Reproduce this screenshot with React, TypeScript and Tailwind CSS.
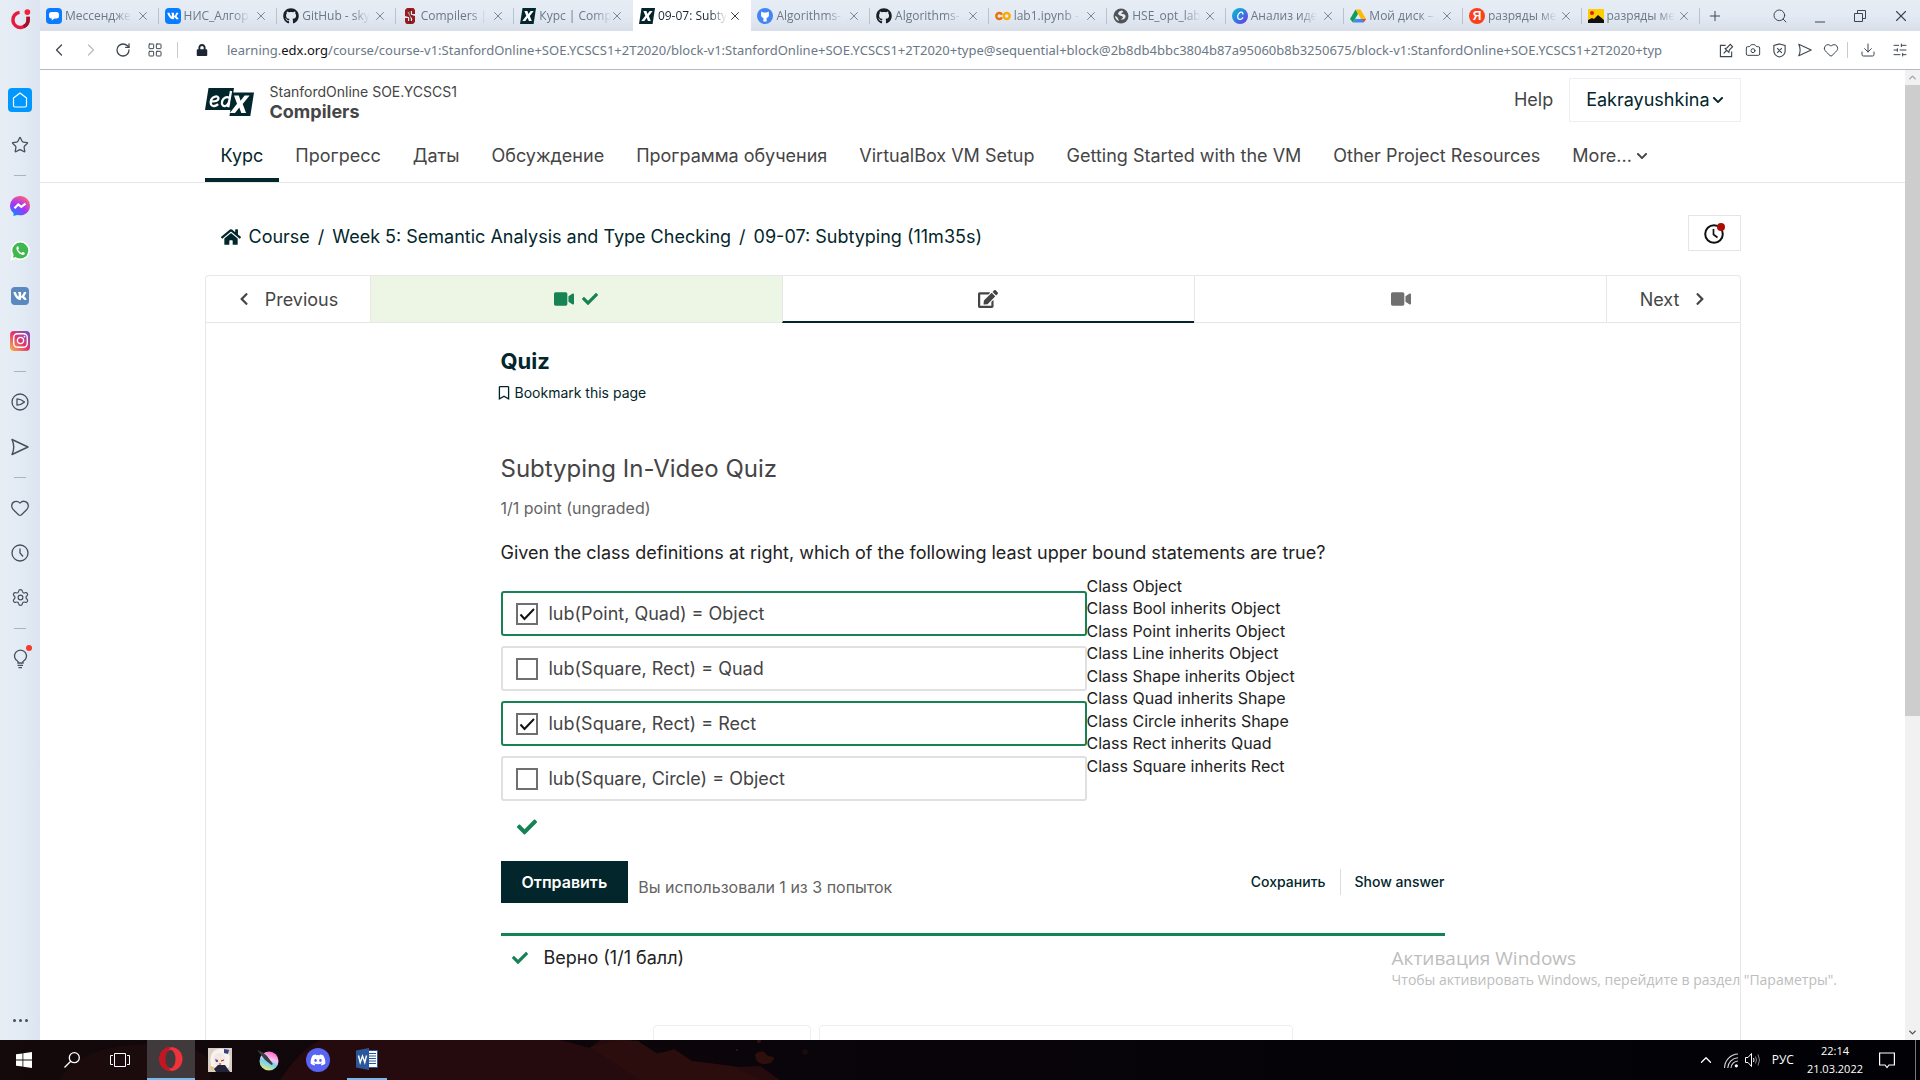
import React from "react";
import {
  FaHome,
  FaVideo,
  FaCheck,
  FaEdit,
  FaChevronLeft,
  FaChevronRight,
  FaChevronDown,
  FaRegBookmark,
  FaGithub,
  FaVk,
  FaInstagram,
  FaDiscord,
  FaLock,
} from "react-icons/fa";
import {
  X,
  Plus,
  Search,
  Minus,
  Camera,
  Heart,
  Download,
  SlidersHorizontal,
  Star,
  Settings,
  ChevronLeft,
  ChevronRight,
  ChevronUp,
  ChevronDown,
  RotateCw,
  LayoutGrid,
} from "lucide-react";

/* ---------- favicons ---------- */

const EdxFavicon = () => (
  <svg viewBox="0 0 16 16" className="size-4">
    <path d="M2.500 0H16l-2.400 16H0z" fill="#02262b" />
    <path d="M4.400 3h3l1 3 2.300-3h3L9.800 8l2 5H8.900L7.700 9.800 5.300 13h-3l4-5.200z" fill="#fff" />
  </svg>
);

const MessengerFavicon = () => (
  <svg viewBox="0 0 16 16" className="size-4">
    <rect width="16" height="16" rx="4" fill="#0a7cff" />
    <path d="M5.500 4h5a2.500 2.500 0 0 1 2.500 2.500v1.500a2.500 2.500 0 0 1-2.500 2.500H8.500L5.800 12.500v-2A2.500 2.500 0 0 1 3 8V6.500A2.500 2.500 0 0 1 5.500 4z" fill="#fff" />
  </svg>
);

const VkFavicon = () => (
  <span className="flex size-4 items-center justify-center rounded bg-[#0a7cff]">
    <FaVk className="size-3 text-white" />
  </span>
);

const GithubFavicon = () => <FaGithub className="size-4 text-[#1b1f24]" />;

const StanfordFavicon = () => (
  <svg viewBox="0 0 16 16" className="size-4">
    <path d="M5 0h6.500l1.500 2v4h-3V3H7v3l6 2v6l-2 2H4.500L3 14v-4h3v3h4v-3L3 8V2z" fill="#9b1b1f" />
    <path d="M8 1v14" stroke="#5c1a1a" strokeWidth="1.500" />
    <path d="M6 4l4 8" stroke="#fff" strokeWidth="0.600" />
  </svg>
);

const GithubBlueFavicon = () => (
  <svg viewBox="0 0 16 16" className="size-4">
    <circle cx="8" cy="8" r="8" fill="#4285f4" />
    <path d="M4.300 3.600l2 .9h3.400l2-.9.3 3.200c0 2-1 2.900-2.500 3.200l.2 3.600H6.300l.2-3.600C5 9.700 4 8.800 4 6.800z" fill="#fff" />
  </svg>
);

const ColabFavicon = () => (
  <svg viewBox="0 0 16 16" className="size-4" fill="none" strokeWidth="2.400">
    <circle cx="4.300" cy="8" r="3" stroke="#e8710a" strokeDasharray="15.500 4" strokeDashoffset="-1.500" />
    <circle cx="11.700" cy="8" r="3" stroke="#f9ab00" />
  </svg>
);

const GlobeFavicon = () => (
  <svg viewBox="0 0 16 16" className="size-4">
    <circle cx="8" cy="8" r="7.500" fill="#50545a" />
    <path d="M9 2.500C6 3 4.500 5 5.500 6.500s3 1 4 2 0 2.500-2 2.500c2 1.500 4.500 0 5-2s-1-3-3-3-1-1.500 1-2" fill="#e9edf2" />
    <path d="M2 8c1 0 2.500 1 3 2.500L6 13C3.500 12.500 2 10 2 8z" fill="#e9edf2" />
  </svg>
);

const CanvaFavicon = () => (
  <svg viewBox="0 0 16 16" className="size-4">
    <defs>
      <linearGradient id="canva" x1="0" y1="0" x2="1" y2="1">
        <stop offset="0" stopColor="#00c4cc" />
        <stop offset="0.500" stopColor="#2f7fe0" />
        <stop offset="1" stopColor="#7d2ae8" />
      </linearGradient>
    </defs>
    <circle cx="8" cy="8" r="8" fill="url(#canva)" />
    <path d="M10.800 6c.3-1.300-.6-2-1.800-1.800C7 4.500 5.500 7 5.700 9.300c.2 2.600 3.600 3 5.100.4" fill="none" stroke="#fff" strokeWidth="1.300" strokeLinecap="round" />
  </svg>
);

const DriveFavicon = () => (
  <svg viewBox="0 0 16 16" className="size-4">
    <path d="M5.500 1.500h5L16 11h-5z" fill="#fbbc04" />
    <path d="M5.500 1.500L8 6 3 14.500 0 11z" fill="#0f9d58" />
    <path d="M5.300 11H16l-2.500 3.500H3z" fill="#4285f4" />
    <path d="M13 11h3l-2.300 3.500z" fill="#ea4335" />
  </svg>
);

const YandexFavicon = () => (
  <span className="flex size-4 items-center justify-center rounded-full bg-[#fc3f1d] font-['Liberation_Sans',sans-serif] text-xs leading-4 font-bold text-white">
    Я
  </span>
);

const YandexImagesFavicon = () => (
  <svg viewBox="0 0 16 16" className="size-4">
    <rect y="1" width="16" height="14" fill="#fc0" />
    <circle cx="4" cy="5" r="2" fill="#e01a1a" />
    <path d="M0 15v-3l4-2 2 1 4-4 6 5v3z" fill="#111" />
  </svg>
);

type Tab = { title: string; icon: React.ReactNode; active?: boolean };

const tabs: Tab[] = [
  { title: "Мессендже", icon: <MessengerFavicon /> },
  { title: "НИС_Алгор", icon: <VkFavicon /> },
  { title: "GitHub - sky", icon: <GithubFavicon /> },
  { title: "Compilers |", icon: <StanfordFavicon /> },
  { title: "Курс | Comp", icon: <EdxFavicon /> },
  { title: "09-07: Subty", icon: <EdxFavicon />, active: true },
  { title: "Algorithms-", icon: <GithubBlueFavicon /> },
  { title: "Algorithms-", icon: <GithubFavicon /> },
  { title: "lab1.ipynb -", icon: <ColabFavicon /> },
  { title: "HSE_opt_lab", icon: <GlobeFavicon /> },
  { title: "Анализ иде", icon: <CanvaFavicon /> },
  { title: "Мой диск –", icon: <DriveFavicon /> },
  { title: "разряды ме", icon: <YandexFavicon /> },
  { title: "разряды ме", icon: <YandexImagesFavicon /> },
];

function TabStrip() {
  return (
    <div className="flex h-[31px] bg-linear-to-b from-[#e6edf5] via-[#e3eaf3] to-[#d8dfe9]">
      <div className="flex min-w-0 flex-1" role="tablist">
        {tabs.map((t, i) => (
          <div
            key={i}
            className={
              t.active
                ? "flex min-w-0 flex-1 items-center bg-white pl-[6px] text-[#1c2733]"
                : "flex min-w-0 flex-1 items-center pl-[6px] text-[#6b7886]"
            }
          >
            <button role="tab" aria-selected={!!t.active} className="flex min-w-0 flex-1 items-center gap-[3px]">
              <span className="shrink-0">{t.icon}</span>
              <span className="flex-1 mask-r-from-75% text-left text-[12px] leading-5 whitespace-nowrap">
                {t.title}
              </span>
            </button>
            <button aria-label="Close tab" className="ml-1 shrink-0">
              <X className="size-[14px]" strokeWidth={1.500} />
            </button>
            <span
              className={
                t.active || i === 4 ? "ml-2 h-5 border-r border-transparent" : "ml-2 h-4 border-r border-[#b9c2cd]"
              }
            />
          </div>
        ))}
      </div>
      <div className="flex w-[220px] items-center justify-between pr-[10px] pl-[7px] text-[#3c4650]">
        <button aria-label="New tab">
          <Plus className="size-4" strokeWidth={1.500} />
        </button>
        <div className="flex items-center gap-6">
          <button aria-label="Search tabs">
            <Search className="size-4" strokeWidth={1.500} />
          </button>
          <button aria-label="Minimize" className="pt-3">
            <Minus className="size-4" strokeWidth={1.500} />
          </button>
          <button aria-label="Restore">
            <svg viewBox="0 0 16 16" className="size-4" fill="none" stroke="currentColor">
              <path d="M2.500 5.500h8v8h-8zM5.500 5.500v-3h8v8h-3" />
            </svg>
          </button>
          <button aria-label="Close window">
            <X className="size-[18px]" strokeWidth={1.500} />
          </button>
        </div>
      </div>
    </div>
  );
}

function AddressBar() {
  return (
    <div className="flex h-[39px] items-center border-b border-[#b4bac3] bg-white pr-3 pl-[9px] text-[#3c4650]">
      <div className="flex items-center gap-3">
        <button aria-label="Back"><ChevronLeft className="size-5" strokeWidth={1.500} /></button>
        <button aria-label="Forward" className="text-[#b7bec6]"><ChevronRight className="size-5" strokeWidth={1.500} /></button>
        <button aria-label="Reload" className="ml-[2px]"><RotateCw className="size-4" strokeWidth={1.900} /></button>
        <button aria-label="Speed dial" className="ml-1"><LayoutGrid className="size-4" strokeWidth={1.500} /></button>
      </div>
      <span className="mx-[14px] h-4 border-l border-[#c5cbd2]" />
      <FaLock className="ml-1 size-3 text-[#1c2733]" />
      <div className="ml-[19px] min-w-0 flex-1 overflow-hidden font-['Noto_Sans',sans-serif] text-[13px] leading-5 whitespace-nowrap text-[#6b7886]">
        learning.<span className="text-[#111]">edx.org</span>
        /course/course-v1:StanfordOnline+SOE.YCSCS1+2T2020/block-v1:StanfordOnline+SOE.YCSCS1+2T2020+type@sequential+block@2b8db4bbc3804b87a95060b8b3250675/block-v1:StanfordOnline+SOE.YCSCS1+2T2020+typ
      </div>
      <div className="ml-3 flex items-center gap-[11px]">
        <button aria-label="Share">
          <svg viewBox="0 0 16 16" className="size-[15px]" fill="none" stroke="currentColor" strokeWidth="1.200">
            <path d="M7 2.500H1.500v12h12V9M5 11l3-3M6.500 6l4 4 .5-2.500L14.500 4 12 1.500 8.700 5z" />
          </svg>
        </button>
        <button aria-label="Snapshot"><Camera className="size-4" strokeWidth={1.500} /></button>
        <button aria-label="Ad blocker">
          <svg viewBox="0 0 16 16" className="size-[15px]" fill="none" stroke="currentColor" strokeWidth="1.200">
            <path d="M8 1l6 1.500v6c0 3-2.500 5.500-6 6.500-3.500-1-6-3.500-6-6.500v-6zM5.500 5.500l5 5M10.500 5.500l-5 5" />
          </svg>
        </button>
        <button aria-label="My flow"><SendIcon className="size-[14px]" /></button>
        <button aria-label="Bookmark"><Heart className="size-4" strokeWidth={1.500} /></button>
      </div>
      <span className="mx-2 h-4 border-l border-[#c5cbd2]" />
      <div className="ml-1 flex items-center gap-4">
        <button aria-label="Downloads"><Download className="size-4" strokeWidth={1.500} /></button>
        <button aria-label="Easy setup"><SlidersHorizontal className="size-4" strokeWidth={1.500} /></button>
      </div>
    </div>
  );
}

/* ---------- sidebar ---------- */

function SendIcon({ className }: { className: string }) {
  return (
    <svg viewBox="0 0 18 18" className={className} fill="none" stroke="currentColor" strokeWidth="1.400" strokeLinejoin="round">
      <path d="M1 1.500L17 9 1 16.500Q4.500 9 1 1.500z" />
    </svg>
  );
}

const Slot = ({ label, children }: { label: string; children: React.ReactNode }) => (
  <button aria-label={label} className="flex h-[45px] w-10 shrink-0 items-center justify-center">
    {children}
  </button>
);

const Dash = () => (
  <div className="flex h-4 items-center">
    <span className="w-3 border-t border-[#aab3be]" />
  </div>
);

function Sidebar() {
  return (
    <aside className="flex w-10 shrink-0 flex-col items-center bg-linear-to-r from-[#e6edf5] via-[#e3ebf4] to-[#dbe4f0] text-[#464f5a]">
      <div className="flex h-[77px] items-start justify-center pt-[9px]">
        <svg viewBox="0 0 22 22" className="size-[21px]" aria-label="Opera menu">
          <path d="M10 3.500A8 8 0 1 0 19 11V8" fill="none" stroke="#e8193c" strokeWidth="3.600" />
          <path d="M19 8v3a8 8 0 0 1-5 7.500" fill="none" stroke="#a50f2d" strokeWidth="3.600" />
          <circle cx="18.200" cy="3.200" r="3" fill="#fa1e3c" />
        </svg>
      </div>
      <Slot label="Home">
        <span className="flex size-6 items-center justify-center rounded-sm bg-[#0098ff]">
          <svg viewBox="0 0 16 16" className="size-4" fill="none" stroke="#fff" strokeWidth="1.200">
            <path d="M8 1l6.500 5v7.500a1.500 1.500 0 0 1-1.500 1.500H3A1.500 1.500 0 0 1 1.500 13.500V6z" strokeLinejoin="round" />
          </svg>
        </span>
      </Slot>
      <Slot label="Bookmarks"><Star className="size-[18px]" strokeWidth={1.700} /></Slot>
      <Dash />
      <Slot label="Messenger">
        <svg viewBox="0 0 20 20" className="size-5">
          <defs>
            <radialGradient id="msg" cx="0.200" cy="1" r="1.100">
              <stop offset="0" stopColor="#0a8dff" />
              <stop offset="0.550" stopColor="#a033ff" />
              <stop offset="1" stopColor="#ff6275" />
            </radialGradient>
          </defs>
          <path d="M10 0a9.800 9.800 0 0 1 10 9.700c0 5.700-4.500 9.600-10 9.600l-3-.4L3.500 20v-3A9.500 9.500 0 0 1 0 9.700 9.800 9.800 0 0 1 10 0z" fill="url(#msg)" />
          <path d="M4.500 12.300L8.200 8.400l3.100 2.400 4.200-3.200" fill="none" stroke="#fff" strokeWidth="2.200" />
        </svg>
      </Slot>
      <Slot label="WhatsApp">
        <svg viewBox="0 0 20 20" className="size-5">
          <path d="M10.500 0a9.500 9.500 0 1 1-4.500 18L0 19.500 2 14A9.500 9.500 0 0 1 10.500 0z" fill="#fff" />
          <circle cx="10.300" cy="9.600" r="8" fill="#40b74f" />
          <path d="M3 16.800l1-4 3 3z" fill="#40b74f" />
          <path d="M7.500 5.300c-2 1.200-1 4.200 1.200 6.400s4.800 3 6 1.200c.4-.7 0-1-1.600-1.900-1-.5-1.200.9-1.900.7-1.200-.5-2.500-1.700-2.900-2.900-.2-.6.9-.9.6-1.700-.4-1.200-.7-2.100-1.400-1.800z" fill="#fff" />
        </svg>
      </Slot>
      <Slot label="VK">
        <span className="flex size-[18px] items-center justify-center rounded bg-[#5b88bd]">
          <FaVk className="size-[14px] text-white" />
        </span>
      </Slot>
      <Slot label="Instagram">
        <span className="flex size-5 items-center justify-center rounded bg-linear-to-tr from-[#f9b23c] via-[#e1306c] to-[#6a3fc6]">
          <FaInstagram className="size-[17px] text-white" />
        </span>
      </Slot>
      <Dash />
      <Slot label="Player">
        <svg viewBox="0 0 18 18" className="size-[18px]" fill="none" stroke="currentColor" strokeWidth="1.300" strokeLinejoin="round">
          <circle cx="9" cy="9" r="8" />
          <path d="M6 5.800v6.400Q10 12 13.500 9 10 6 6 5.800z" />
        </svg>
      </Slot>
      <Slot label="My flow"><SendIcon className="size-[18px]" /></Slot>
      <Dash />
      <Slot label="Favourites"><Heart className="size-5" strokeWidth={1.500} /></Slot>
      <Slot label="History">
        <svg viewBox="0 0 18 18" className="size-[18px]" fill="none" stroke="currentColor" strokeWidth="1.300">
          <circle cx="9" cy="9" r="8" />
          <path d="M9 4.500V9l3 3.500" />
        </svg>
      </Slot>
      <Slot label="Settings"><Settings className="size-[19px]" strokeWidth={1.500} /></Slot>
      <Dash />
      <Slot label="Tips">
        <span className="relative">
          <svg viewBox="0 0 16 20" className="h-5 w-4" fill="none" stroke="currentColor" strokeWidth="1.300">
            <path d="M6 14v-1.500a6 6 0 1 1 5 0V14zM5.500 16.300H11M6.500 18.700H10" />
          </svg>
          <span className="absolute -top-1 -right-1 size-[6px] rounded-full bg-[#f5392b]" />
        </span>
      </Slot>
      <div className="mt-auto flex h-10 items-center gap-[3px]">
        <span className="size-[3px] rounded-full bg-[#464f5a]" />
        <span className="size-[3px] rounded-full bg-[#464f5a]" />
        <span className="size-[3px] rounded-full bg-[#464f5a]" />
      </div>
    </aside>
  );
}

/* ---------- course page ---------- */

const navItems = [
  "Курс",
  "Прогресс",
  "Даты",
  "Обсуждение",
  "Программа обучения",
  "VirtualBox VM Setup",
  "Getting Started with the VM",
  "Other Project Resources",
];

function EdxLogo() {
  return (
    <svg viewBox="0 0 49 28" className="h-7 w-[49px] shrink-0" role="img" aria-label="edX">
      <path d="M3.500 0H29l-.7 4.500H49L45.300 28H24.500l.9-6H0z" fill="#02262b" />
      <g fill="none" stroke="#fff" strokeWidth="2.300">
        <path d="M5.800 13.200c4.800.6 8-.8 7.600-3.200-.5-2.500-5.500-2-7.200 1.700-1.700 4 .2 6.800 3.200 6.300 1.500-.2 2.700-.9 3.700-1.900" />
        <path d="M24.300 9.800c-3-1.600-6.300.2-7.200 3.600-.9 3.600 1.300 5.200 3.400 4.600 2.200-.6 3.500-3 4-6.200L26 3M23.200 19.300l1-5" />
      </g>
      <path d="M29 7.500h4.800l1.800 5.200 4-5.200h5L37.700 16l3.400 9h-4.800l-2-5.600L30 25h-5.200l7.200-9.300z" fill="#fff" />
    </svg>
  );
}

function CourseHeader() {
  return (
    <header className="border-b border-[#e7e7e7]">
      <div className="mx-auto max-w-[1536px]">
        <div className="flex h-[52px] items-center justify-between pt-2">
          <a href="#home" className="flex items-center gap-4 pt-1">
            <EdxLogo />
            <span className="flex flex-col text-[#454545]">
              <span className="text-[14px] leading-5">StanfordOnline SOE.YCSCS1</span>
              <span className="text-[18px] leading-5 font-bold">Compilers</span>
            </span>
          </a>
          <div className="flex items-center gap-4">
            <a href="#help" className="text-[18px] leading-7 text-[#454545]">Help</a>
            <button className="flex h-11 items-center gap-0.5 border border-[#eee] px-4 text-[18px] leading-7 text-[#02262b]">
              Eakrayushkina
              <FaChevronDown className="size-3" />
            </button>
          </div>
        </div>
        <nav className="mt-2 flex text-[18px] leading-7 text-[#454545]">
          {navItems.map((n, i) => (
            <a
              key={n}
              href="#course"
              className={
                i === 0
                  ? "border-b-4 border-[#02262b] px-4 pt-3 pb-2 text-[#02262b]"
                  : "border-b-4 border-transparent px-4 pt-3 pb-2"
              }
            >
              {n}
            </a>
          ))}
          <button className="flex items-center gap-1 px-4 pt-3 pb-3">
            More...
            <FaChevronDown className="size-3" />
          </button>
        </nav>
      </div>
    </header>
  );
}

const options = [
  { text: "lub(Point, Quad) = Object", checked: true },
  { text: "lub(Square, Rect) = Quad", checked: false },
  { text: "lub(Square, Rect) = Rect", checked: true },
  { text: "lub(Square, Circle) = Object", checked: false },
];

const classes = [
  "Class Object",
  "Class Bool inherits Object",
  "Class Point inherits Object",
  "Class Line inherits Object",
  "Class Shape inherits Object",
  "Class Quad inherits Shape",
  "Class Circle inherits Shape",
  "Class Rect inherits Quad",
  "Class Square inherits Rect",
];

function Option({ text, checked }: { text: string; checked: boolean }) {
  return (
    <label
      className={
        checked
          ? "flex h-[45px] items-center gap-[11px] rounded-[3px] border-2 border-[#178253] px-[13px] text-[18px] leading-7"
          : "flex h-[45px] items-center gap-[11px] rounded-[3px] border-2 border-[#e0e0e0] px-[13px] text-[18px] leading-7"
      }
    >
      <span className="relative size-[22px]">
        <input
          type="checkbox"
          defaultChecked={checked}
          className="peer block size-[22px] appearance-none border-2 border-[#6f6f6f] bg-white"
        />
        <svg
          viewBox="0 0 22 22"
          className="pointer-events-none absolute inset-0 hidden size-[22px] peer-checked:block"
          fill="none"
          stroke="#111"
          strokeWidth="2"
        >
          <path d="M4.500 11.500l4 4.500 9.500-10" />
        </svg>
      </span>
      {text}
    </label>
  );
}

function Problem() {
  return (
    <article className="mx-auto max-w-[944px] pt-6 text-[#454545]">
      <h1 className="text-[22px] leading-7 font-bold text-[#02262b]">Quiz</h1>
      <button className="mt-2 -ml-1 flex items-center gap-1 text-[14px] leading-5 text-[#02262b]">
        <FaRegBookmark className="size-[14px]" />
        Bookmark this page
      </button>
      <h2 className="mt-[50px] text-[24px] leading-8">Subtyping In-Video Quiz</h2>
      <p className="mt-[11px] text-[16px] leading-6 text-[#646464]">1/1 point (ungraded)</p>
      <p className="mt-[19px] text-[18px] leading-7 text-[#222]">
        Given the class definitions at right, which of the following least upper bound statements are true?
      </p>
      <div className="mt-2 flex">
        <fieldset className="mt-4 flex w-[586px] flex-col gap-[10px]">
          {options.map((o) => (
            <Option key={o.text} text={o.text} checked={o.checked} />
          ))}
        </fieldset>
        <ul className="grid h-[202px] flex-1 grid-rows-9 text-[16px] leading-[22px] text-[#222]">
          {classes.map((c) => (
            <li key={c}>{c}</li>
          ))}
        </ul>
      </div>
      <FaCheck className="mt-4 ml-4 size-5 text-[#178253]" />
      <div className="mt-6 flex items-center">
        <button className="h-[42px] bg-[#02262b] px-[21px] text-[16px] leading-6 font-semibold text-white">
          Отправить
        </button>
        <span className="ml-[10px] flex-1 pt-[10px] text-[16px] leading-6 text-[#646464]">
          Вы использовали 1 из 3 попыток
        </span>
        <button className="border-r border-[#ddd] pr-[14px] text-[14px] leading-[26px] font-medium text-[#02262b]">
          Сохранить
        </button>
        <button className="pl-[14px] text-[14px] leading-[26px] font-medium text-[#02262b]">Show answer</button>
      </div>
      <div className="mt-[30px] flex items-center border-t-3 border-[#178253] pt-2 pl-[11px] text-[18px] leading-7 text-[#222]">
        <FaCheck className="mr-4 size-4 text-[#178253]" />
        Верно (1/1 балл)
      </div>
      <div className="mx-auto mt-[53px] flex w-[640px] gap-2">
        <button aria-label="Previous unit" className="h-12 w-[158px] rounded border border-[#eee]" />
        <button aria-label="Next unit" className="h-12 flex-1 rounded border border-[#eee]" />
      </div>
    </article>
  );
}

function CoursePage() {
  return (
    <div className="flex min-w-0 flex-1 flex-col overflow-hidden font-['Inter',sans-serif]">
      <CourseHeader />
      <div className="mx-auto flex w-full max-w-[1536px] flex-1 flex-col pt-8">
        <div className="flex items-end justify-between">
          <ol className="ml-4 flex items-center gap-2 text-[18px] leading-7 text-[#02262b]">
            <li>
              <a href="#home" className="flex items-center gap-2">
                <FaHome className="size-5" />
                Course
              </a>
            </li>
            <li>/</li>
            <li><a href="#week">Week 5: Semantic Analysis and Type Checking</a></li>
            <li>/</li>
            <li><a href="#unit">09-07: Subtyping (11m35s)</a></li>
          </ol>
          <button aria-label="Notifications" className="flex h-9 w-[53px] items-center justify-center border border-[#e5e5e5]">
            <svg viewBox="0 0 22 22" className="size-[22px]" fill="none">
              <circle cx="11" cy="12" r="8.800" stroke="#111" strokeWidth="2" />
              <path d="M10.500 7v5.500l4 3" stroke="#111" strokeWidth="1.700" />
              <circle cx="18" cy="5" r="4" fill="#ab0d02" />
            </svg>
          </button>
        </div>
        <div className="mt-6 flex-1 rounded-t border border-b-0 border-[#e7e7e7]">
          <nav className="flex h-[47px] border-b border-[#e7e7e7] text-[18px] text-[#454545]">
            <button className="flex w-[164px] items-center justify-center gap-[14px]">
              <FaChevronLeft className="size-[14px]" />
              Previous
            </button>
            <button aria-label="Video, completed" className="flex flex-1 items-center justify-center gap-2 border-l border-[#e7e7e7] bg-[#edf6e5] text-[#178253]">
              <FaVideo className="size-5" />
              <FaCheck className="size-4" />
            </button>
            <button aria-label="Quiz" className="-mb-px flex flex-1 items-center justify-center border-b-2 border-l border-b-[#02262b] border-l-[#e7e7e7]">
              <FaEdit className="size-5" />
            </button>
            <button aria-label="Video" className="flex flex-1 items-center justify-center border-l border-[#e7e7e7] text-[#707070]">
              <FaVideo className="size-5" />
            </button>
            <button className="flex w-[133px] items-center justify-center gap-[14px] border-l border-[#e7e7e7]">
              Next
              <FaChevronRight className="size-[14px]" />
            </button>
          </nav>
          <Problem />
        </div>
      </div>
    </div>
  );
}

/* ---------- taskbar ---------- */

function Taskbar() {
  return (
    <footer className="relative flex h-10 shrink-0 items-center justify-between overflow-hidden bg-linear-to-r from-[#14090b] via-[#08040a] to-[#020206] text-white">
      <svg className="absolute inset-y-0 left-0 h-10 w-[900px]" viewBox="0 0 900 40" aria-hidden="true">
        <path d="M60 40Q80 5 150 4T210 40z" fill="#1c0b0c" />
        <path d="M280 40q20-30 40-40h240l30 8 10-8 30 0 20 14 20-3 20 10 50 6 20-1 20 14z" fill="#260b0e" />
        <path d="M590 7l30-7 18 1 20 13 16-5 18 12 40 5 30 14H640z" fill="#2a0d0c" />
        <path d="M755 15q3-5 9-3l4 4 6 1q0 6-8 7-10 1-11-9z" fill="#2e0f0c" />
        <circle cx="805" cy="12" r="3" fill="#190a0b" />
        <circle cx="737" cy="10" r="1" fill="#3a1914" />
        <circle cx="759" cy="1" r="2" fill="#2e1512" />
      </svg>
      <div className="relative flex h-10 items-center">
        <button aria-label="Start" className="flex w-12 justify-center">
          <svg viewBox="0 0 16 16" className="size-4" fill="#fff">
            <path d="M0 2.300l6.500-.9v6.100H0zM7.300 1.300L16 0v7.500H7.300zM0 8.400h6.500v6.200L0 13.700zM7.300 8.400H16V16l-8.700-1.300z" />
          </svg>
        </button>
        <button aria-label="Search" className="flex w-12 justify-center">
          <svg viewBox="0 0 16 16" className="size-4" fill="none" stroke="#fff" strokeWidth="1.300">
            <circle cx="10.300" cy="5.700" r="5" />
            <path d="M6.700 9.300L.5 15.500" />
          </svg>
        </button>
        <button aria-label="Task view" className="flex w-12 justify-center">
          <svg viewBox="0 0 20 16" className="h-4 w-5" fill="none" stroke="#fff">
            <path d="M4.500 1.500h11v13h-11zM3 3.500H.5v9H3M17 3.500h2.500v9H17" />
          </svg>
        </button>
        <button aria-label="Opera" className="ml-[3px] flex h-10 w-12 items-center justify-center border-b-2 border-[#76b9ed] bg-[#413a3c]">
          <svg viewBox="0 0 24 24" className="size-6">
            <ellipse cx="12" cy="12" rx="11.500" ry="12" fill="#f0323a" />
            <path d="M12 0A12 12 0 0 0 12 24L9 20V4z" fill="#c41622" />
            <ellipse cx="11.500" cy="12" rx="5" ry="9.300" fill="#413a3c" />
          </svg>
        </button>
        <button aria-label="Game" className="ml-[13px] size-6 overflow-hidden">
          <svg viewBox="0 0 24 24" className="size-6">
            <rect width="24" height="24" fill="#d9cfc6" />
            <path d="M3 18Q0 4 10 1q10-2 12 8l-1 10-6 3z" fill="#f7f2ee" />
            <path d="M6 10q6-3 11 0v4q-5 6-10 2z" fill="#fbe4d6" />
            <path d="M5 12q1-6 6-7 5 0 7 6l-3-3-3 3-2-3z" fill="#efe7e4" />
            <path d="M6 21l4-4 7 0 5 7H8z" fill="#232238" />
            <path d="M16 1l5 1-1 4-4-1z" fill="#35427c" />
            <path d="M7 11l3 1v2H8z" fill="#4a5aa0" />
            <path d="M13 13l3-1M11 16h2" stroke="#5b3b3b" />
            <path d="M2 18l4 2-2 3z" fill="#f2c14e" />
          </svg>
        </button>
        <button aria-label="Krita" className="ml-[25px]">
          <svg viewBox="0 0 22 22" className="size-[22px]">
            <defs>
              <linearGradient id="krita" x1="0.700" y1="0" x2="0.300" y2="1">
                <stop offset="0" stopColor="#ff5bd0" />
                <stop offset="0.400" stopColor="#f7c8ea" />
                <stop offset="0.600" stopColor="#6fd3f5" />
                <stop offset="1" stopColor="#f3e96b" />
              </linearGradient>
            </defs>
            <circle cx="12" cy="12" r="9.500" fill="url(#krita)" />
            <path d="M0 1l6 2.500 4 3.500 6 8-1.500 1-6.500-5-4-5z" fill="#3a3d43" />
          </svg>
        </button>
        <button aria-label="Discord" className="ml-[27px] flex size-6 items-center justify-center rounded-full bg-[#5865f2]">
          <FaDiscord className="size-4" />
        </button>
        <button aria-label="Word" className="ml-[17px] flex h-10 w-10 items-center justify-center border-b-2 border-[#76b9ed]">
          <svg viewBox="0 0 24 22" className="h-[22px] w-6">
            <rect x="11" y="2.500" width="11.500" height="17" fill="#fff" stroke="#2b579a" />
            <path d="M14 5.500h7M14 8h7M14 10.500h7M14 13h7M14 15.500h7" stroke="#2b579a" />
            <path d="M1 2.500L14 0v22L1 19.500z" fill="#2b579a" />
            <path d="M3.500 7.500l1.700 7L7.500 8l2.300 6.500 1.700-7" fill="none" stroke="#fff" strokeWidth="1.400" />
          </svg>
        </button>
      </div>
      <div className="relative flex h-10 items-center text-xs">
        <button aria-label="Show hidden icons"><ChevronUp className="size-[18px]" strokeWidth={1.700} /></button>
        <svg viewBox="0 0 14 14" className="ml-[9px] size-[15px]" fill="none" stroke="#ddd" aria-label="Wi-Fi">
          <path d="M.5 14A13 13 0 0 1 13 1M3.500 14A10 10 0 0 1 13 4.500M6.500 14A7 7 0 0 1 13 7.500" />
          <circle cx="11.500" cy="12" r="1.500" fill="#fff" stroke="none" />
        </svg>
        <svg viewBox="0 0 17 16" className="ml-[6px] h-4 w-[17px]" fill="none" stroke="#fff" aria-label="Volume">
          <path d="M.5 5.500H3l3.500-4v13L3 10.500H.5z" />
          <path d="M8.500 6q1 2 0 4" />
          <path d="M10.500 4.500q2 3.500 0 7M13 2.500q3 5.500 0 11" stroke="#888" />
        </svg>
        <span className="ml-[10px]">РУС</span>
        <div className="ml-[13px] text-center text-[11px] leading-[18px]">
          <div>22:14</div>
          <div>21.03.2022</div>
        </div>
        <button aria-label="Notifications" className="ml-4">
          <svg viewBox="0 0 16 17" className="h-[17px] w-4" fill="none" stroke="#fff" strokeWidth="1.200">
            <path d="M.6 1h14.800v12H10l-2 2.500L6 13H.6z" />
          </svg>
        </button>
        <span className="mr-1 ml-5 h-10 border-l border-[#777]" />
      </div>
    </footer>
  );
}

export default function App() {
  return (
    <div className="flex h-screen flex-col overflow-hidden bg-white font-['Open_Sans','Noto_Sans',sans-serif]">
      <div className="flex min-h-0 flex-1">
        <Sidebar />
        <div className="relative flex min-w-0 flex-1 flex-col">
          <TabStrip />
          <AddressBar />
          <main className="flex min-h-0 flex-1">
            <CoursePage />
            <div className="flex w-[15px] shrink-0 flex-col items-center bg-[#f1f1f1]" aria-hidden="true">
              <ChevronUp className="my-[2px] size-[11px] text-[#a3a3a3]" strokeWidth={3} />
              <div className="h-[631px] w-full bg-[#cdcdcd]" />
              <ChevronDown className="mt-auto mb-[2px] size-[11px] text-[#505050]" strokeWidth={3} />
            </div>
          </main>
          <div className="pointer-events-none absolute right-[83px] bottom-[50px] text-[#bdbdbd]">
            <div className="text-[19px] leading-6">Активация Windows</div>
            <div className="text-[14px] leading-5">Чтобы активировать Windows, перейдите в раздел "Параметры".</div>
          </div>
        </div>
      </div>
      <Taskbar />
    </div>
  );
}
